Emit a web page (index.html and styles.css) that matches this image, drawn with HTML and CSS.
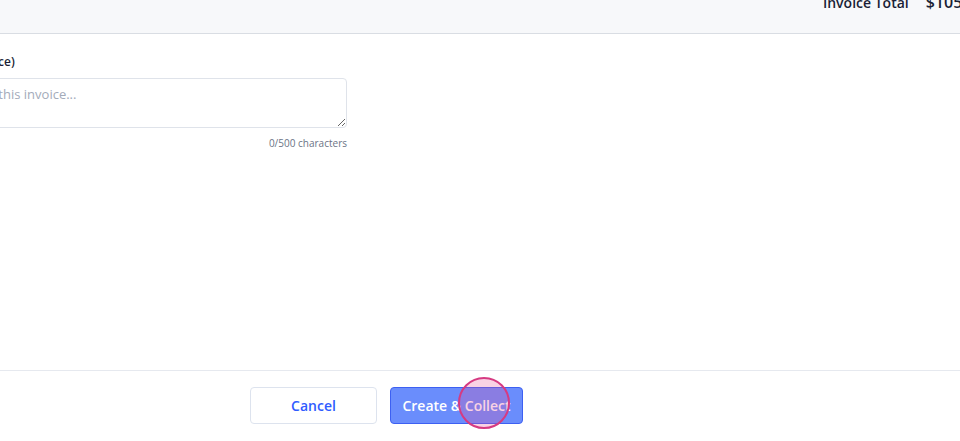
FILE: index.html
```html
<!DOCTYPE html>
<html>
  <head>
    <meta name="viewport" content="width=device-width, initial-scale=1.0" />
    <link rel="stylesheet" href="styles.css">
  </head>
  <body>
    <main>
      <header class="summary">
        <div class="total">
          <span class="total-label">Invoice Total</span>
          <span class="total-value">$105.00</span>
        </div>
      </header>
      <section class="form">
        <div class="field">
          <label for="memo">Memo (shown on invoice)</label>
          <textarea id="memo" placeholder="Add a short note to this invoice..."></textarea>
          <div class="counter">0/500 characters</div>
        </div>
      </section>
      <footer class="actions">
        <button class="btn btn-secondary">Cancel</button>
        <button class="btn btn-primary">Create &amp; Collect</button>
      </footer>
    </main>
    <div class="tap"></div>
  </body>
</html>
```

FILE: styles.css
```css
html {
  height: 100%;
  padding: 0;
  margin: 0;
}
body {
  height: 100%;
  margin: 0;
  padding: 0;
  overflow: hidden;
  font-family: "Open Sans", sans-serif;
  background-color: white;
  color: #1a1f36;
}
main {
  height: 100%;
  display: flex;
  flex-flow: column;
}

.summary {
  height: 33px;
  background-color: #f7f8fa;
  border-bottom: 1px solid #d9dde3;
  display: flex;
  justify-content: flex-end;
  overflow: hidden;
}
.total {
  display: flex;
  align-items: baseline;
  gap: 17px;
  margin-top: -9px;
  margin-right: -25px;
  white-space: nowrap;
}
.total-label {
  font-size: 14px;
  font-weight: 600;
}
.total-value {
  font-size: 16px;
  font-weight: 600;
}

.form {
  flex: 1;
  padding-top: 19px;
}
.field {
  width: 480px;
  margin-left: -133px;
  display: flex;
  flex-flow: column;
}
.field label {
  font-size: 12px;
  font-weight: 600;
  line-height: 18px;
  margin-bottom: 7px;
}
.field textarea {
  height: 50px;
  box-sizing: border-box;
  border: 1px solid #dfe3ea;
  border-radius: 4px;
  padding: 6px 10px;
  font-family: "Open Sans", sans-serif;
  font-size: 13px;
  color: #1a1f36;
  resize: vertical;
}
.field textarea::placeholder {
  color: #a3abba;
}
.counter {
  text-align: right;
  font-size: 10px;
  color: #6b7385;
  margin-top: 8px;
}

.actions {
  border-top: 1px solid #e6e9ef;
  height: 71px;
  display: flex;
  align-items: flex-start;
  gap: 13px;
  padding: 16px 0 0 250px;
  box-sizing: border-box;
}
.btn {
  height: 37px;
  border-radius: 4px;
  font-family: "Open Sans", sans-serif;
  font-size: 14px;
  font-weight: 600;
  cursor: pointer;
}
.btn-secondary {
  width: 127px;
  background-color: white;
  border: 1px solid #dde3ee;
  color: #2f5cff;
}
.btn-primary {
  width: 133px;
  background-color: #6a8dfc;
  border: 1px solid #3d60f2;
  color: white;
}

.tap {
  position: absolute;
  left: 458px;
  top: 377px;
  width: 48px;
  height: 48px;
  border-radius: 50%;
  border: 2px solid #d63a82;
  background-color: rgba(230, 80, 150, 0.26);
}
```
